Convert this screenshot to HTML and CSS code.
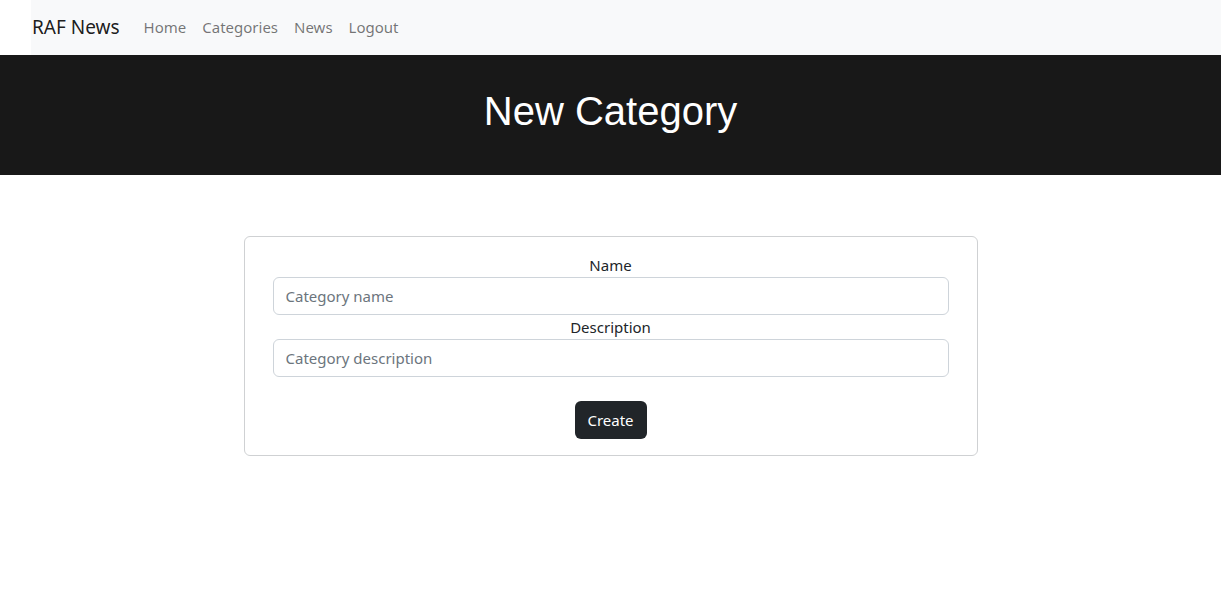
FILE: index.html
```html
<!DOCTYPE html>
<html lang="en">
<head>
<meta charset="utf-8">
<title>RAF News - New Category</title>
<link rel="stylesheet" href="styles.css">
</head>
<body>
<nav class="navbar">
  <a class="brand" href="#">RAF News</a>
  <ul class="nav-links">
    <li><a href="#">Home</a></li>
    <li><a href="#">Categories</a></li>
    <li><a href="#">News</a></li>
    <li><a href="#">Logout</a></li>
  </ul>
</nav>
<header class="hero">
  <h1>New Category</h1>
</header>
<main class="main">
  <form class="card">
    <label class="label" for="name">Name</label>
    <input class="input" id="name" type="text" placeholder="Category name">
    <label class="label" for="desc">Description</label>
    <input class="input" id="desc" type="text" placeholder="Category description">
    <button class="btn" type="button">Create</button>
  </form>
</main>
</body>
</html>
```
FILE: styles.css
```css
* { box-sizing: border-box; }
body {
  margin: 0;
  font-family: "Noto Sans", "Open Sans", sans-serif;
  font-size: 15px;
  color: #212529;
  background: #fff;
}
.navbar {
  margin-left: 31px;
  height: 55px;
  background: #f8f9fa;
  display: flex;
  align-items: center;
  padding-left: 1px;
  padding-bottom: 2px;
}
.brand {
  font-size: 19px;
  color: rgba(0,0,0,.9);
  text-decoration: none;
  margin-right: 16px;
}
.nav-links {
  list-style: none;
  margin: 0;
  padding: 0;
  display: flex;
}
.nav-links a {
  display: block;
  padding: 8px 8px;
  color: rgba(0,0,0,.55);
  text-decoration: none;
  font-size: 15px;
}
.hero {
  background: #181818;
  height: 120px;
  display: flex;
  align-items: center;
  justify-content: center;
}
.hero h1 {
  margin: 0;
  color: #fff;
  font-family: "Liberation Sans", Arial, sans-serif;
  font-weight: 400;
  font-size: 40px;
  padding-bottom: 7px;
}
.main {
  display: flex;
  justify-content: center;
  padding-top: 61px;
}
.card {
  width: 734px;
  border: 1px solid #cfd1d3;
  border-radius: 6px;
  padding: 16px 28px 16px;
  display: flex;
  flex-direction: column;
  align-items: center;
}
.label {
  height: 24px;
  line-height: 24px;
  display: block;
  text-align: center;
  font-size: 15px;
}
.input {
  width: 100%;
  height: 38px;
  border: 1px solid #ced4da;
  border-radius: 6px;
  padding: 6px 12px;
  font-family: inherit;
  font-size: 15px;
  color: #212529;
}
.input::placeholder { color: #6c757d; }
.btn {
  margin-top: 24px;
  height: 38px;
  width: 72px;
  background: #212529;
  color: #fff;
  border: none;
  border-radius: 6px;
  font-family: inherit;
  font-size: 15px;
}
```
